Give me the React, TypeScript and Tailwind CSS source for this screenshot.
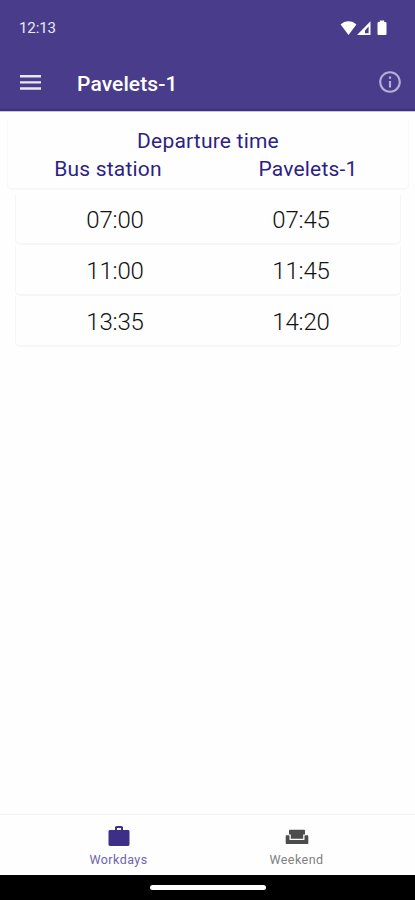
import React from 'react'
import { MdInfoOutline } from 'react-icons/md'

interface IDeparture {
  from: string
  to: string
}

const DEPARTURES: IDeparture[] = [
  { from: '07:00', to: '07:45' },
  { from: '11:00', to: '11:45' },
  { from: '13:35', to: '14:20' },
]

const StatusBar: React.FC = () => (
  <div className="flex h-[57px] items-center justify-between pl-[19px] pr-7 text-white">
    <span className="text-[15px] leading-none tracking-[-0.1px] text-[#eceaf6]">12:13</span>
    <div className="flex items-center pb-px">
      {/* wifi */}
      <svg width="17" height="16" viewBox="0 0 17 16" fill="currentColor">
        <path d="M8.5 15 .6 4.6C2.7 2.4 5.5 1.2 8.5 1.2s5.8 1.2 7.9 3.4L8.5 15Z" />
      </svg>
      {/* mobile signal */}
      <svg width="14" height="16" viewBox="0 0 14 16" fill="currentColor">
        <path fillRule="evenodd" d="M0 15 13.5 1.3V15H0Zm8-1.8h3.6V6.6L9.5 8.7 8 10.6v2.6Z" />
      </svg>
      {/* battery */}
      <svg width="10" height="16" viewBox="0 0 10 16" fill="currentColor" className="ml-[6px]">
        <path d="M2.8.6h4.4v1.5h1.1c.7 0 1.2.5 1.2 1.2v10.6c0 .7-.5 1.2-1.2 1.2H1.7c-.7 0-1.2-.5-1.2-1.2V3.3c0-.7.5-1.2 1.2-1.2h1.1V.6Z" />
      </svg>
    </div>
  </div>
)

const Toolbar: React.FC = () => (
  <div className="flex h-[53px] items-center pl-5 pr-3">
    <button type="button" aria-label="Menu" className="pb-[4px] text-[#e9e6f6]">
      <svg width="21" height="16" viewBox="0 0 21 16" fill="currentColor">
        <path d="M0 1h21v2.4H0V1Zm0 6.2h21v2.4H0V7.2Zm0 6.1h21v2.4H0v-2.4Z" />
      </svg>
    </button>
    <h1 className="ml-9 flex-1 pt-[2px] text-[21px] font-medium leading-none tracking-[0.1px] text-white">
      Pavelets-1
    </h1>
    <button type="button" aria-label="Info" className="pb-[3px] text-[#b5afd8]">
      <MdInfoOutline size={26} />
    </button>
  </div>
)

const Briefcase: React.FC = () => (
  <svg width="22" height="22" viewBox="0 0 22 22" fill="currentColor">
    <path
      fillRule="evenodd"
      d="M7 5V2.8c0-1 .8-1.8 1.8-1.8h4.4c1 0 1.8.8 1.8 1.8V5h5c.8 0 1.5.6 1.5 1.4v13.2c0 .8-.7 1.4-1.5 1.4H2c-.8 0-1.5-.6-1.5-1.4V6.4C.5 5.6 1.2 5 2 5h5Zm2 0h4V2.9H9V5Z"
    />
  </svg>
)

const Sofa: React.FC = () => (
  <svg width="24" height="16" viewBox="0 0 24 16" fill="currentColor">
    <path d="M4 1.8c0-.6.4-1 1-1h14c.6 0 1 .4 1 1v3.7h-1.8v4.2H5.8V5.5H4V1.8Z" />
    <path d="M.7 7.2c0-.6.4-1 1-1h1.8c.6 0 1 .4 1 1V11h15V7.2c0-.6.4-1 1-1h1.8c.6 0 1 .4 1 1v7c0 .5-.4.9-.9.9H1.6c-.5 0-.9-.4-.9-.9v-7Z" />
  </svg>
)

const App: React.FC = () => {
  return (
    <div className="flex h-screen flex-col bg-[#fefefe] font-['Roboto',sans-serif]">
      <header className="h-[111px] border-b-2 border-[#3f3085] bg-[#493d8b]">
        <StatusBar />
        <Toolbar />
      </header>

      <main className="flex-1 border-t border-[#c9c5df]">
        <section className="ml-[7px] mr-[6px] mt-[7px] h-[71px] rounded-b-[5px] border-x border-b-2 border-[#f7f7f7] pt-[8px] text-center text-[21px] leading-[28px] tracking-[0.2px] text-[#2e1f86]">
          <p>Departure time</p>
          <div className="grid grid-cols-2">
            <span>Bus station</span>
            <span>Pavelets-1</span>
          </div>
        </section>

        <ul className="ml-[15px] mr-[14px] mt-[4px]">
          {DEPARTURES.map((item) => (
            <li
              key={item.from}
              className="grid h-[51px] grid-cols-2 items-center rounded-b-[5px] border-x border-b-2 border-[#f6f6f6] px-[6px] pt-[3px] text-center text-[24px] font-light leading-none tracking-[-0.2px] text-[#111]"
            >
              <span>{item.from}</span>
              <span>{item.to}</span>
            </li>
          ))}
        </ul>
      </main>

      <nav className="flex h-[61px] justify-center border-t border-[#f2f2f2] text-[12.5px] leading-none">
        <button type="button" className="flex w-[178px] flex-col items-center pt-[10px] text-[#3d2e88]">
          <Briefcase />
          <span className="mt-[7px] font-normal tracking-[0.45px] text-[#6f65a8]">Workdays</span>
        </button>
        <button type="button" className="flex w-[178px] flex-col items-center pt-[14px] text-[#4c4c4c]">
          <Sofa />
          <span className="mt-[9px] font-normal tracking-[0.45px] text-[#808080]">Weekend</span>
        </button>
      </nav>

      {/* gesture bar */}
      <div className="flex h-[25px] justify-center bg-black pt-[10px]">
        <div className="h-[5px] w-[116px] rounded-full bg-white" />
      </div>
    </div>
  )
}

export default App
